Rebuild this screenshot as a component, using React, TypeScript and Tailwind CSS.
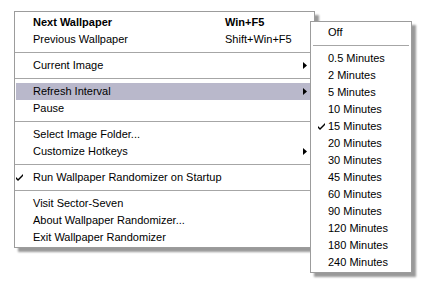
import React from "react";

const font = { fontFamily: '"Liberation Sans", Arial, sans-serif' };

function Check() {
  return (
    <svg width="7" height="7" viewBox="0 0 7 7" className="block">
      <path d="M0 3 L0 5 L2 7 L7 2 L7 0 L2 5 Z" fill="#000" />
    </svg>
  );
}

function Arrow() {
  return (
    <svg width="4" height="7" viewBox="0 0 4 7" className="block">
      <path d="M0 0 L4 3.5 L0 7 Z" fill="#000" />
    </svg>
  );
}

type Item =
  | { sep: true }
  | {
      sep?: false;
      label: string;
      shortcut?: string;
      bold?: boolean;
      sub?: boolean;
      checked?: boolean;
      active?: boolean;
    };

const mainItems: Item[] = [
  { label: "Next Wallpaper", shortcut: "Win+F5", bold: true },
  { label: "Previous Wallpaper", shortcut: "Shift+Win+F5" },
  { sep: true },
  { label: "Current Image", sub: true },
  { sep: true },
  { label: "Refresh Interval", sub: true, active: true },
  { label: "Pause" },
  { sep: true },
  { label: "Select Image Folder..." },
  { label: "Customize Hotkeys", sub: true },
  { sep: true },
  { label: "Run Wallpaper Randomizer on Startup", checked: true },
  { sep: true },
  { label: "Visit Sector-Seven" },
  { label: "About Wallpaper Randomizer..." },
  { label: "Exit Wallpaper Randomizer" },
];

const subItems: string[] = [
  "0.5 Minutes",
  "2 Minutes",
  "5 Minutes",
  "10 Minutes",
  "15 Minutes",
  "20 Minutes",
  "30 Minutes",
  "45 Minutes",
  "60 Minutes",
  "90 Minutes",
  "120 Minutes",
  "180 Minutes",
  "240 Minutes",
];

export default function App() {
  return (
    <div className="w-[428px] h-[288px] bg-white relative overflow-hidden text-[11px] text-black" style={font}>
      <div className="absolute left-[14px] top-[11px] w-[301px] bg-white border border-[#9c9c9c] pt-[2px] pb-[1px] shadow-[4px_4px_2px_rgba(0,0,0,0.4)]">
        {mainItems.map((it, i) =>
          it.sep ? (
            <div key={i} className="h-[9px] flex items-center">
              <div className="h-px w-full bg-[#a6a6a6]" />
            </div>
          ) : (
            <div
              key={i}
              className={`h-[17px] mx-[1px] flex items-center leading-[17px] whitespace-nowrap ${
                it.active ? "bg-[#b9b8cb]" : ""
              }`}
            >
              <div className="w-[17px] flex items-center pl-[0px]">{it.checked ? <Check /> : null}</div>
              <div className={`w-[192px] ${it.bold ? "font-bold" : ""}`}>{it.label}</div>
              <div className={`flex-1 ${it.bold ? "font-bold" : ""}`}>{it.shortcut ?? ""}</div>
              <div className="w-[4px] mr-[6px] flex items-center">{it.sub ? <Arrow /> : null}</div>
            </div>
          )
        )}
      </div>

      <div className="absolute left-[310px] top-[21px] w-[102px] bg-white border border-[#9c9c9c] pt-[2px] pb-[1px] shadow-[4px_4px_2px_rgba(0,0,0,0.4)]">
        <div className="h-[17px] flex items-center leading-[17px] pl-[17px]">Off</div>
        <div className="h-[9px] flex items-center px-[2px]">
          <div className="h-px w-full bg-[#a6a6a6]" />
        </div>
        {subItems.map((s) => (
          <div key={s} className="h-[17px] flex items-center leading-[17px] whitespace-nowrap">
            <div className="w-[17px] pl-[7px] flex items-center">{s === "15 Minutes" ? <Check /> : null}</div>
            <div>{s}</div>
          </div>
        ))}
      </div>
    </div>
  );
}
